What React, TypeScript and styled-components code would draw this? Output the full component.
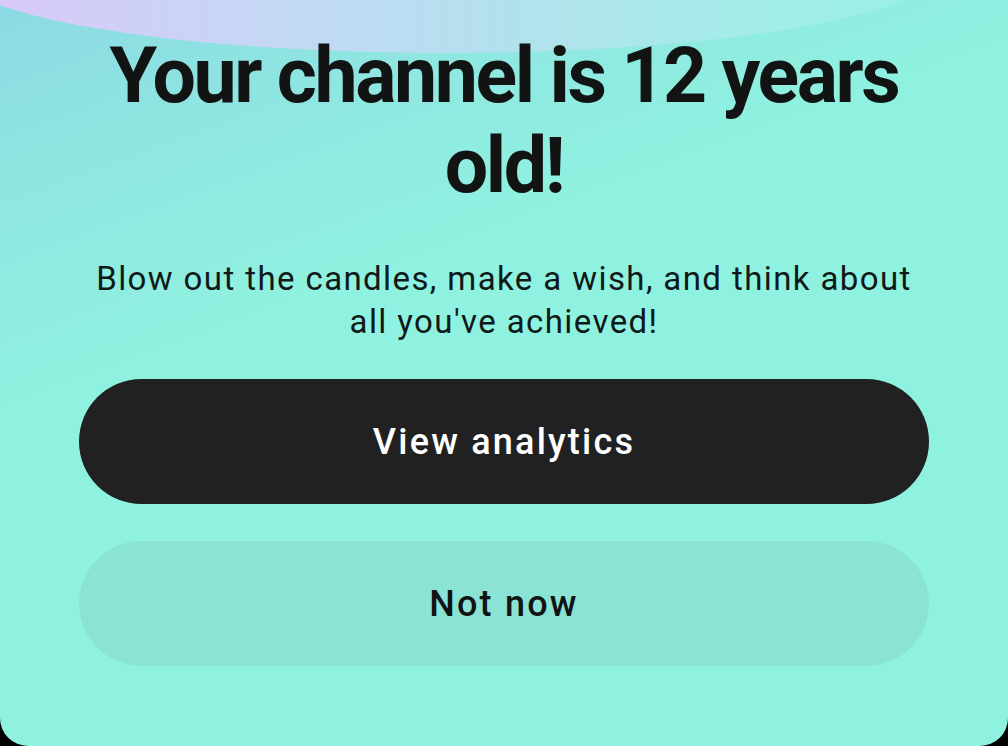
import React from 'react';
import styled, { createGlobalStyle } from 'styled-components';

const GlobalStyle = createGlobalStyle`
  html, body {
    margin: 0;
    padding: 0;
    background: #000000;
  }
  * {
    box-sizing: border-box;
  }
`;

const Card = styled.div`
  position: relative;
  width: 1008px;
  height: 746px;
  overflow: hidden;
  border-radius: 0 0 28px 28px;
  background: linear-gradient(160deg, #8cd9e3 0%, #8fe6e1 18%, #8ff2e0 38%, #8ff2e0 100%);
`;

// decorative glow at the top of the sheet
const Arc = styled.div`
  position: absolute;
  left: -50px;
  top: -117px;
  width: 990px;
  height: 170px;
  border-radius: 50%;
  background: linear-gradient(90deg, #dcc7fb 0%, #c6d6f4 30%, #b3e0ee 55%, #a4ece8 80%, #98f0e2 100%);
`;

const Content = styled.div`
  position: relative;
  display: flex;
  flex-direction: column;
  align-items: center;
  padding: 31px 79px 0;
`;

const Title = styled.h1`
  margin: 0;
  width: 850px;
  text-align: center;
  font-family: Roboto, 'Noto Sans', sans-serif;
  font-weight: 700;
  font-size: 77px;
  line-height: 90px;
  letter-spacing: -2.4px;
  color: #121414;
`;

const Subtitle = styled.p`
  margin: 46px 0 0;
  width: 850px;
  text-align: center;
  font-family: Roboto, 'Noto Sans', sans-serif;
  font-size: 33px;
  line-height: 43px;
  letter-spacing: 1.4px;
  color: #0f1a18;
`;

const Actions = styled.div`
  display: flex;
  flex-direction: column;
  gap: 37px;
  width: 850px;
  margin-top: 36px;
`;

const Button = styled.button<{ $primary?: boolean }>`
  height: 125px;
  width: 100%;
  border: none;
  border-radius: 63px;
  font-family: Roboto, 'Noto Sans', sans-serif;
  font-weight: 500;
  font-size: 36px;
  letter-spacing: 2.2px;
  cursor: pointer;
  background: ${(p) => (p.$primary ? '#212121' : '#8be3d6')};
  color: ${(p) => (p.$primary ? '#ffffff' : '#111413')};
`;

export default function App() {
  return (
    <>
      <GlobalStyle />
      <Card>
        <Arc />
        <Content>
          <Title>Your channel is 12 years old!</Title>
          <Subtitle>
            Blow out the candles, make a wish, and think about all you've achieved!
          </Subtitle>
          <Actions>
            <Button $primary>View analytics</Button>
            <Button>Not now</Button>
          </Actions>
        </Content>
      </Card>
    </>
  );
}
